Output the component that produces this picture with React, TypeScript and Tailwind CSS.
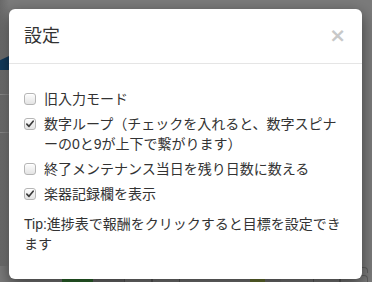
function Check({ checked }: { checked?: boolean }) {
  return (
    <span className="absolute left-0 top-[4px] flex h-[12px] w-[12px] items-center justify-center rounded-[3px] border border-[#b5b5b5] bg-gradient-to-b from-[#fdfdfd] to-[#e4e4e4] shadow-[inset_0_1px_0_#fff]">
      {checked && (
        <svg viewBox="0 0 12 12" className="h-[10px] w-[10px]">
          <path d="M2.2 6.2 L4.8 8.8 L9.8 2.6" fill="none" stroke="#3a3a3a" strokeWidth="2" strokeLinecap="round" strokeLinejoin="round" />
        </svg>
      )}
    </span>
  );
}

function Option({ label, checked }: { label: string; checked?: boolean }) {
  return (
    <label className="relative block pl-[20px] leading-[20px]">
      <Check checked={checked} />
      {label}
    </label>
  );
}

export default function App() {
  return (
    <div className="relative h-[282px] w-[372px] overflow-hidden bg-[#7b7b7b] font-['Liberation_Sans','Noto_Sans_CJK_JP',sans-serif] text-[14px] text-[#333]">
      {/* page under the backdrop */}
      <div className="flex h-full flex-col">
        <div className="flex flex-1">
          <div className="flex w-[9px] flex-col bg-gradient-to-r from-[#6a6a6a] to-[#7b7b7b]">
            <div className="h-[56px]" />
            <div className="h-[14px] bg-[#123a5c] [clip-path:polygon(0_30%,100%_0,100%_100%,0_100%)]" />
            <div className="h-[24px]" />
            <div className="h-px bg-[#8a8a8a]" />
            <div className="h-[37px]" />
            <div className="h-px bg-[#8a8a8a]" />
          </div>
        </div>
        <div className="flex h-[7px] items-end">
          <div className="ml-[62px] h-[6px] w-[48px] bg-[#0f4a2c]" />
          <div className="ml-[14px] h-[6px] w-[28px] rounded-t-[4px] border border-b-0 border-[#5e5e5e]" />
          <div className="h-[6px] w-[28px] rounded-t-[4px] border border-b-0 border-[#5e5e5e]" />
          <div className="ml-[70px] h-[6px] w-[31px] bg-[#1f5a1f]" />
          <div className="ml-[32px] h-[6px] w-[27px] rounded-t-[4px] border border-b-0 border-[#5e5e5e]" />
          <div className="h-[6px] w-[28px] rounded-t-[4px] border border-b-0 border-[#5e5e5e]" />
        </div>
        <div className="mt-[2px] flex h-[7px]">
          <div className="ml-[62px] h-full w-[31px] bg-[#2f6e2f]" />
          <div className="h-full w-[31px] bg-[#717171]" />
          <div className="h-full w-[28px] rounded-t-[4px] border border-b-0 border-[#5e5e5e]" />
          <div className="h-full w-[28px] rounded-t-[4px] border border-b-0 border-[#5e5e5e]" />
          <div className="ml-[70px] h-full w-[15px] bg-[#6e7a34]" />
          <div className="h-full w-[16px] bg-[#777]" />
          <div className="ml-[32px] h-full w-[27px] rounded-t-[4px] border border-b-0 border-[#5e5e5e]" />
          <div className="h-full w-[28px] rounded-t-[4px] border border-b-0 border-[#5e5e5e]" />
        </div>
      </div>

      {/* modal */}
      <div className="absolute left-[9px] top-[9px] w-[353px] rounded-[6px] bg-white shadow-[0_5px_15px_rgba(0,0,0,0.5)]">
        <div className="flex items-start justify-between border-b border-[#e5e5e5] p-[15px] pb-[14px]">
          <h4 className="text-[18px] leading-[25px]">設定</h4>
          <button className="mr-[1px] mt-[1px] font-['DejaVu_Sans',sans-serif] text-[20px] font-bold leading-[21px] text-[#c8c8c8]">×</button>
        </div>
        <div className="p-[15px]">
          <div className="my-[10px] flex flex-col gap-[5px]">
            <Option label="旧入力モード" />
            <Option label="数字ループ（チェックを入れると、数字スピナーの0と9が上下で繋がります）" checked />
            <Option label="終了メンテナンス当日を残り日数に数える" />
            <Option label="楽器記録欄を表示" checked />
          </div>
          <p className="mb-[10px] leading-[20px]">Tip:進捗表で報酬をクリックすると目標を設定できます</p>
        </div>
      </div>
    </div>
  );
}
